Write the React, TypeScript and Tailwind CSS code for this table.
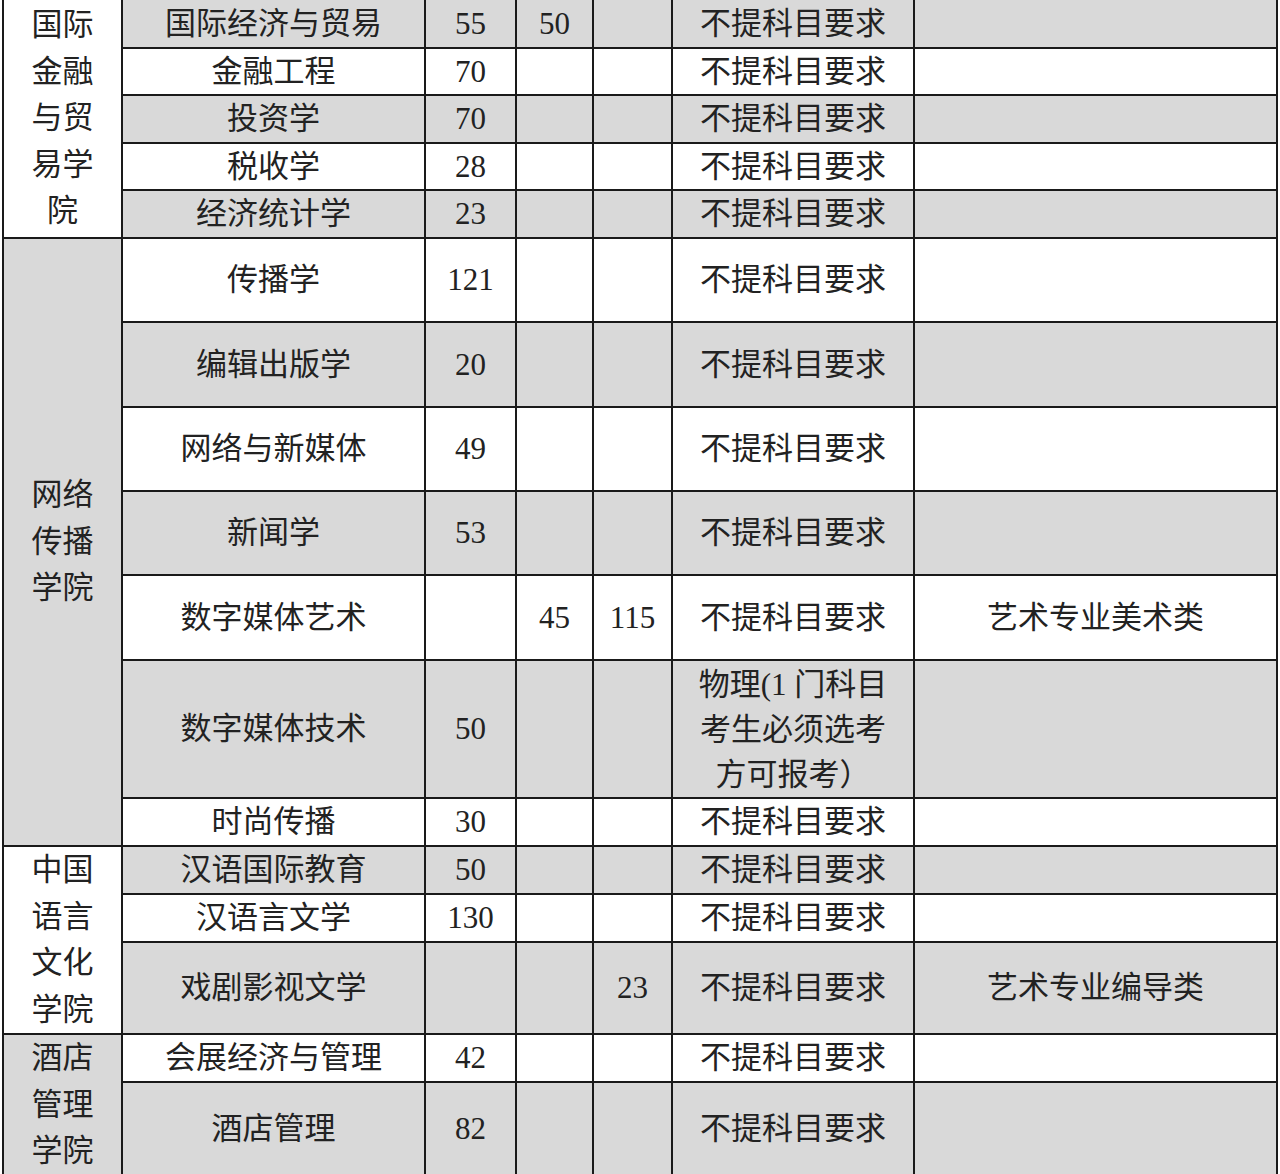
type Row = {
  name: string;
  a?: string;
  b?: string;
  c?: string;
  req: React.ReactNode;
  note?: string;
  h: number;
  gray: boolean;
};

type Group = { label: string; bg: string; rows: Row[] };

const NR = '不提科目要求';

const groups: Group[] = [
  {
    label: '国际金融与贸易学院',
    bg: 'bg-white',
    rows: [
      { name: '国际经济与贸易', a: '55', b: '50', req: NR, h: 48, gray: true },
      { name: '金融工程', a: '70', req: NR, h: 47, gray: false },
      { name: '投资学', a: '70', req: NR, h: 48, gray: true },
      { name: '税收学', a: '28', req: NR, h: 47, gray: false },
      { name: '经济统计学', a: '23', req: NR, h: 48, gray: true },
    ],
  },
  {
    label: '网络传播学院',
    bg: 'bg-[#d9d9d9]',
    rows: [
      { name: '传播学', a: '121', req: NR, h: 84, gray: false },
      { name: '编辑出版学', a: '20', req: NR, h: 85, gray: true },
      { name: '网络与新媒体', a: '49', req: NR, h: 84, gray: false },
      { name: '新闻学', a: '53', req: NR, h: 84, gray: true },
      { name: '数字媒体艺术', b: '45', c: '115', req: NR, note: '艺术专业美术类', h: 85, gray: false },
      {
        name: '数字媒体技术',
        a: '50',
        req: (
          <span className="block leading-[45px]">
            物理(1 门科目
            <br />
            考生必须选考
            <br />
            方可报考）
          </span>
        ),
        h: 138,
        gray: true,
      },
      { name: '时尚传播', a: '30', req: NR, h: 48, gray: false },
    ],
  },
  {
    label: '中国语言文化学院',
    bg: 'bg-white',
    rows: [
      { name: '汉语国际教育', a: '50', req: NR, h: 47, gray: true },
      { name: '汉语言文学', a: '130', req: NR, h: 48, gray: false },
      { name: '戏剧影视文学', c: '23', req: NR, note: '艺术专业编导类', h: 91, gray: true },
    ],
  },
  {
    label: '酒店管理学院',
    bg: 'bg-[#d9d9d9]',
    rows: [
      { name: '会展经济与管理', a: '42', req: NR, h: 47, gray: false },
      { name: '酒店管理', a: '82', req: NR, h: 93, gray: true },
    ],
  },
];

const cell = 'border-2 border-[#1a1a1a] text-center align-middle p-0 leading-[34px]';

export default function App() {
  return (
    <div
      className="w-[1280px] h-[1174px] bg-white overflow-hidden text-[#222] text-[31px]"
      style={{ fontFamily: '"Liberation Serif", "Noto Sans CJK SC", serif' }}
    >
      <table className="ml-[2px] w-[1276px] table-fixed border-collapse border-t-0">
        <colgroup>
          <col className="w-[119px]" />
          <col className="w-[303px]" />
          <col className="w-[91px]" />
          <col className="w-[77px]" />
          <col className="w-[79px]" />
          <col className="w-[242px]" />
          <col />
        </colgroup>
        <tbody>
          {groups.map((g, gi) =>
            g.rows.map((r, ri) => {
              const bg = r.gray ? 'bg-[#d9d9d9]' : 'bg-white';
              const top = gi === 0 && ri === 0 ? ' border-t-0' : '';
              return (
                <tr key={r.name} style={{ height: r.h }}>
                  {ri === 0 && (
                    <td rowSpan={g.rows.length} className={`${cell}${top} ${g.bg} px-[26px] !leading-[46.5px]`}>
                      {g.label}
                    </td>
                  )}
                  <td className={`${cell}${top} ${bg}`}>{r.name}</td>
                  <td className={`${cell}${top} ${bg}`}>{r.a}</td>
                  <td className={`${cell}${top} ${bg}`}>{r.b}</td>
                  <td className={`${cell}${top} ${bg}`}>{r.c}</td>
                  <td className={`${cell}${top} ${bg}`}>{r.req}</td>
                  <td className={`${cell}${top} ${bg}`}>{r.note}</td>
                </tr>
              );
            })
          )}
        </tbody>
      </table>
    </div>
  );
}
